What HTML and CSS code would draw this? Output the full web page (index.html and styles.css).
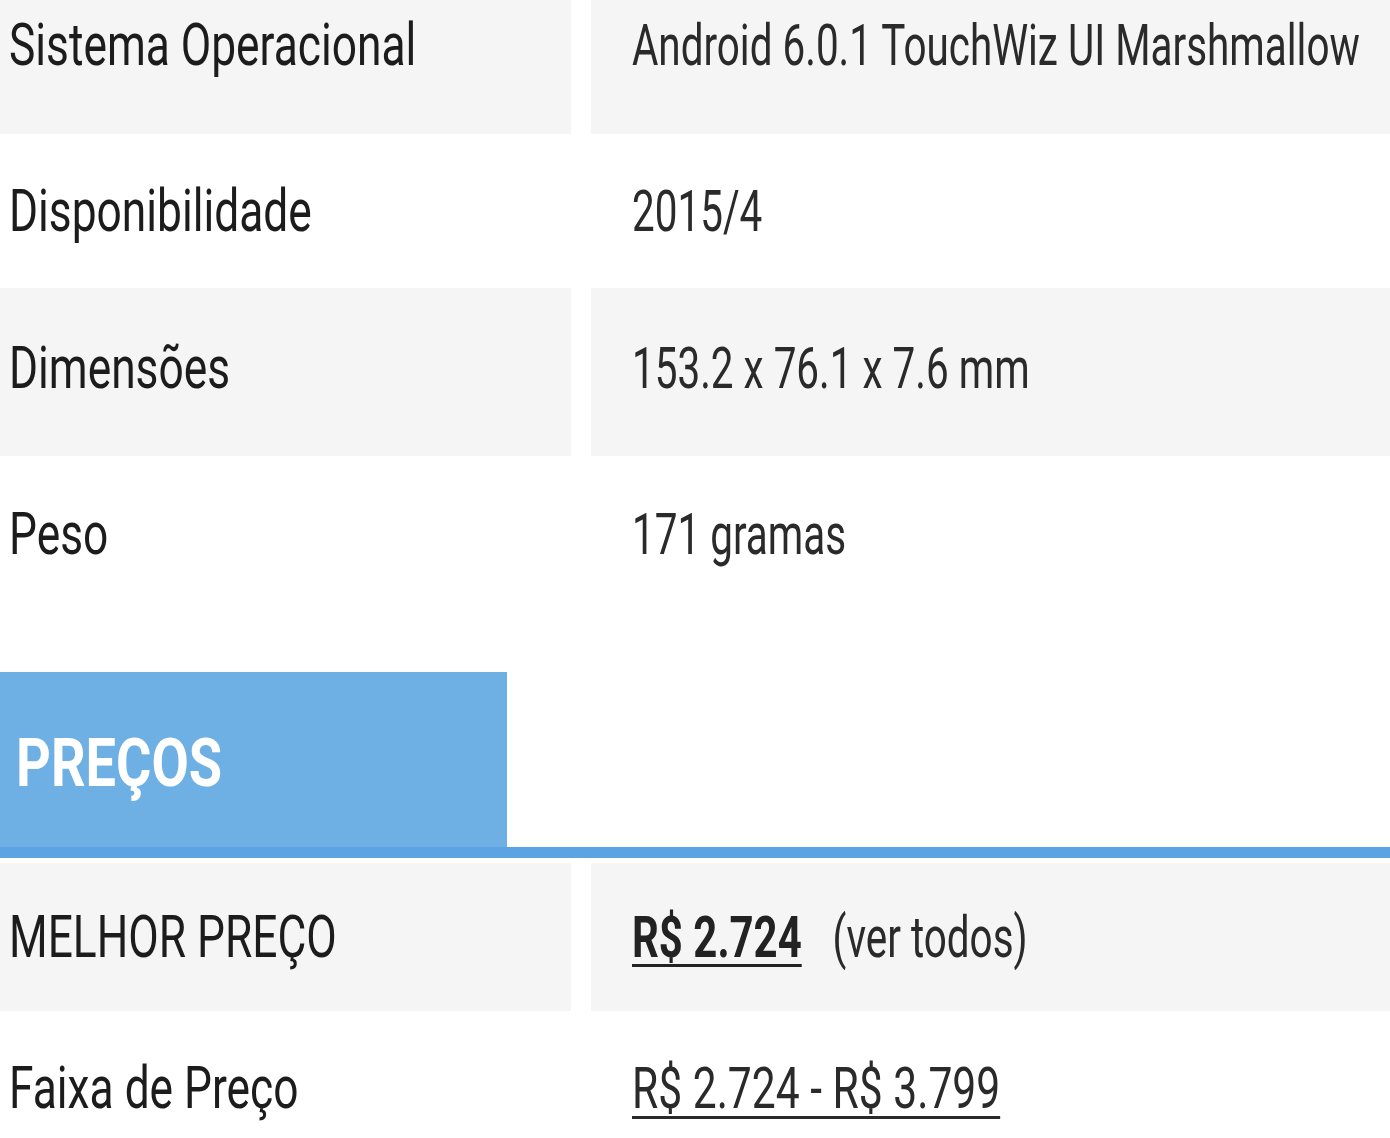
FILE: index.html
```html
<!DOCTYPE html>
<html lang="pt-BR">
<head>
<meta charset="utf-8">
<title>Especificações</title>
<link rel="stylesheet" href="styles.css">
</head>
<body>
<div class="specs">
  <div class="row alt r1">
    <div class="label"><span class="t">Sistema Operacional</span></div>
    <div class="value"><span class="t">Android 6.0.1 TouchWiz UI Marshmallow</span></div>
  </div>
  <div class="row r2">
    <div class="label"><span class="t">Disponibilidade</span></div>
    <div class="value"><span class="t">2015/4</span></div>
  </div>
  <div class="row alt r3">
    <div class="label"><span class="t">Dimensões</span></div>
    <div class="value"><span class="t">153.2 x 76.1 x 7.6 mm</span></div>
  </div>
  <div class="row r4">
    <div class="label"><span class="t">Peso</span></div>
    <div class="value"><span class="t">171 gramas</span></div>
  </div>
</div>

<div class="section-head">
  <div class="section-tab"><span class="t">PREÇOS</span></div>
</div>

<div class="specs prices">
  <div class="row alt r5">
    <div class="label"><span class="t">MELHOR PREÇO</span></div>
    <div class="value"><span class="t"><a class="best" href="#">R$ 2.724</a><a class="all" href="#">(ver todos)</a></span></div>
  </div>
  <div class="row r6">
    <div class="label"><span class="t">Faixa de Preço</span></div>
    <div class="value"><span class="t"><a class="range" href="#">R$ 2.724 - R$ 3.799</a></span></div>
  </div>
</div>
</body>
</html>
```

FILE: styles.css
```css
html, body {
  margin: 0;
  padding: 0;
  background: #ffffff;
}

body {
  font-family: Roboto, "Noto Sans", "Liberation Sans", sans-serif;
  width: 1390px;
  height: 1138px;
  overflow: hidden;
}

.t {
  display: inline-block;
  white-space: nowrap;
  font-size: 60px;
  line-height: 1;
  transform: scaleX(0.738);
  transform-origin: left center;
}

.row {
  display: flex;
  gap: 20px;
}

.label,
.value {
  display: flex;
  align-items: center;
  box-sizing: border-box;
  min-width: 0;
}

.label {
  width: 571px;
  flex: none;
  padding-left: 9px;
  color: #1c1c1c;
}

.value {
  flex: 1;
  padding-left: 41px;
  color: #2a2a2a;
  overflow: hidden;
}

.value .t {
  font-size: 58px;
  transform: scaleX(0.697);
}

.row.alt .label,
.row.alt .value {
  background: #f5f5f5;
}

.r1 { height: 134px; padding-bottom: 44px; box-sizing: border-box; }
.r1 .label, .r1 .value { margin-bottom: -44px; padding-bottom: 44px; }
.r2 { height: 154px; }
.r3 { height: 168px; }
.r3 .label, .r3 .value { padding-bottom: 8px; }
.r4 { height: 156px; }

.section-head {
  margin-top: 60px;
  border-bottom: 11px solid #5ba3e2;
}

.section-tab {
  width: 507px;
  height: 175px;
  background: #6fb0e4;
  display: flex;
  align-items: center;
  box-sizing: border-box;
  padding-left: 16px;
  padding-top: 8px;
  color: #ffffff;
}

.section-tab .t {
  font-size: 66px;
  font-weight: 700;
  transform: scaleX(0.82);
}

.prices {
  margin-top: 5px;
}

.r5 { height: 148px; }
.r6 { height: 154px; }

.r6 .value .t {
  transform: scaleX(0.734);
}

a {
  color: #222222;
  text-decoration: underline;
  text-decoration-thickness: 3px;
  text-underline-offset: 7px;
}

.best {
  display: inline-block;
  font-weight: 700;
  transform: scaleX(1.037);
  transform-origin: left center;
}

.all {
  margin-left: 53px;
  text-decoration: none;
  color: #2a2a2a;
}

.range {
  color: #2a2a2a;
  text-underline-offset: 8px;
}
```
